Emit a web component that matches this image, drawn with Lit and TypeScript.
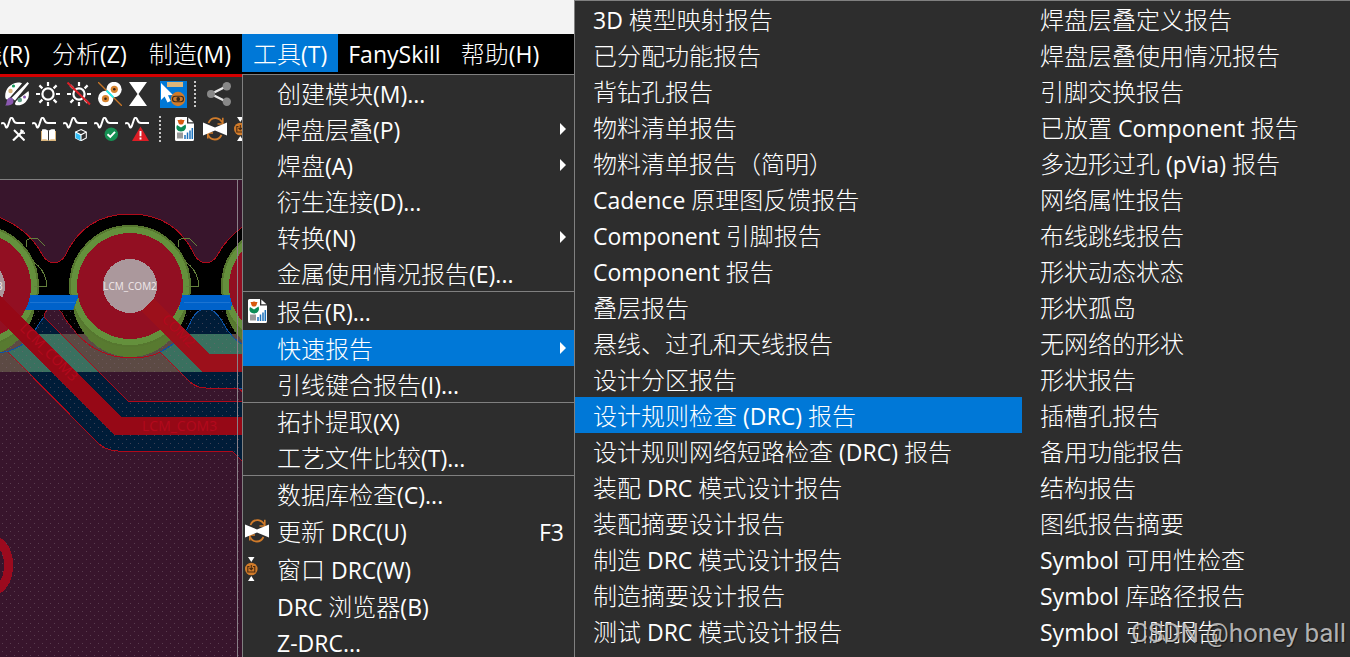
import { LitElement, html, svg, css, nothing, TemplateResult } from "lit";
import { customElement, property, state } from "lit/decorators.js";
import { classMap } from "lit/directives/class-map.js";

type IconName = "report" | "refresh" | "window";

interface MenuEntry {
  label: string;
  icon?: IconName;
  shortcut?: string;
  submenu?: boolean;
  active?: boolean;
}

const TOOLS_MENU: MenuEntry[][] = [
  [
    { label: "创建模块(M)..." },
    { label: "焊盘层叠(P)", submenu: true },
    { label: "焊盘(A)", submenu: true },
    { label: "衍生连接(D)..." },
    { label: "转换(N)", submenu: true },
    { label: "金属使用情况报告(E)..." },
  ],
  [
    { label: "报告(R)...", icon: "report" },
    { label: "快速报告", submenu: true, active: true },
    { label: "引线键合报告(I)..." },
  ],
  [{ label: "拓扑提取(X)" }, { label: "工艺文件比较(T)..." }],
  [
    { label: "数据库检查(C)..." },
    { label: "更新 DRC(U)", icon: "refresh", shortcut: "F3" },
    { label: "窗口 DRC(W)", icon: "window" },
    { label: "DRC 浏览器(B)" },
    { label: "Z-DRC..." },
  ],
];

const QUICK_REPORTS: string[][] = [
  [
    "3D 模型映射报告",
    "已分配功能报告",
    "背钻孔报告",
    "物料清单报告",
    "物料清单报告（简明）",
    "Cadence 原理图反馈报告",
    "Component 引脚报告",
    "Component 报告",
    "叠层报告",
    "悬线、过孔和天线报告",
    "设计分区报告",
    "设计规则检查 (DRC) 报告",
    "设计规则网络短路检查 (DRC) 报告",
    "装配 DRC 模式设计报告",
    "装配摘要设计报告",
    "制造 DRC 模式设计报告",
    "制造摘要设计报告",
    "测试 DRC 模式设计报告",
  ],
  [
    "焊盘层叠定义报告",
    "焊盘层叠使用情况报告",
    "引脚交换报告",
    "已放置 Component 报告",
    "多边形过孔 (pVia) 报告",
    "网络属性报告",
    "布线跳线报告",
    "形状动态状态",
    "形状孤岛",
    "无网络的形状",
    "形状报告",
    "插槽孔报告",
    "备用功能报告",
    "结构报告",
    "图纸报告摘要",
    "Symbol 可用性检查",
    "Symbol 库路径报告",
    "Symbol 引脚报告",
  ],
];

// Latin runs are set one step smaller and heavier than the Chinese characters beside them.
const label = (text: string) =>
  text
    .split(/([\x20-\x7e]+)/)
    .filter(Boolean)
    .map((run) => (/^[\x20-\x7e]/.test(run) ? html`<span class="latin">${run}</span>` : run));

const box = (content: TemplateResult, size = 24) => html`<svg
  width=${size}
  height=${size}
  viewBox="0 0 ${size} ${size}"
  aria-hidden="true"
>
  ${content}
</svg>`;

const rays = svg`<circle cx="12" cy="12" r="5.6" fill="none" stroke="#fff" stroke-width="2.2"/>
  <path d="M12 0v4M12 20v4M0 12h4M20 12h4M3.4 3.4l3 3M17.6 17.6l3 3M20.6 3.4l-3 3M6.4 17.6l-3 3" stroke="#fff" stroke-width="2.2"/>`;

const wave = svg`<path d="M0 6.500C3 5 4 7 4.500 9C5.300 12 6.700 10 7.500 7L9 2.500C9.700 .3 11.300 .3 12.200 2.500C13.200 5 13.500 6 16 6H24" fill="none" stroke="#fff" stroke-width="2"/>`;

const ICONS = {
  palette: box(svg`<path d="M13 .5C5 1.500 0 7 .2 14.500C.3 18 2.500 18.500 5 16L17 1.500C16 .5 14.500 .3 13 .5Z" fill="#fff"/>
    <path d="M11 19L23.500 9C25 14 22.500 20 17 22.500C13 24 9.500 23.500 10 21.500Z" fill="#fff"/>
    <path d="M4.500 16L18.500 .5L24 2L10 20Z" fill="#2d2d2d"/>
    <path d="M6.500 16L22.500 0L24 1.500L10 18.500Z" fill="#fff"/>
    <path d="M0 23.500C2 22.500 1 19 3 16.500C4.500 14.700 8.500 15.500 8.500 19C8.500 23 4 24 0 23.500Z" fill="#8a58b0"/>
    <circle cx="5.500" cy="9" r="2.200" fill="#dbb67c"/><circle cx="8.500" cy="4" r="1.600" fill="#159a5c"/>
    <circle cx="14.800" cy="18" r="2.300" fill="#5b9b83"/><circle cx="19.500" cy="15" r="1.500" fill="#8a58b0"/>`),
  sun: box(rays),
  sunOff: box(svg`${rays}<path d="M.5 .5L23 22.500" stroke="#dd1d25" stroke-width="2"/>`),
  pads: box(svg`<circle cx="16" cy="7.500" r="7.700" fill="#fff"/><circle cx="7.700" cy="16.500" r="7.700" fill="#fff"/>
    <circle cx="16.300" cy="7.300" r="3.600" fill="#d8842f"/><circle cx="16.300" cy="7.300" r="1.300" fill="#3a2414"/>
    <circle cx="7.500" cy="16.700" r="3.600" fill="#d8842f"/><circle cx="7.500" cy="16.700" r="1.300" fill="#3a2414"/>
    <path d="M0 0L24 24" stroke="#c87524" stroke-width="1.300"/><path d="M8.500 8.500L15.500 15.500" stroke="#23eef0" stroke-width="1.800"/>`),
  hourglass: box(svg`<path d="M0 0H18L9.500 12L18 24H0L8.500 12Z" fill="#fff"/>`),
  pick: box(
    svg`<rect width="27" height="27" fill="#0078d7"/><rect x="7" y="1" width="16" height="5" fill="#dbb67c"/>
    <path d="M1 2L1 19L4.600 15.500L7.500 21.500L10.700 20L8 14.200L13 14Z" fill="#fff"/>
    <circle cx="18" cy="18" r="7.200" fill="#d07b2a"/>
    <rect x="12.500" y="15.300" width="11" height="5.400" rx="2.700" fill="none" stroke="#38291c" stroke-width="1.100"/>
    <rect x="16.500" y="16" width="3.500" height="4" rx="1.500" fill="#38291c"/>`,
    27,
  ),
  share: box(svg`<path d="M4 12L20 4M4 12L20 20" stroke="#e8e8e8" stroke-width="2.500"/>
    <circle cx="4" cy="12" r="4" fill="#888"/><circle cx="19.800" cy="4.200" r="4.200" fill="#888"/><circle cx="19.800" cy="19.800" r="4.200" fill="#888"/>`),
  waveTools: box(svg`${wave}<path d="M13 13L23.500 23.500" stroke="#fff" stroke-width="2"/><path d="M12 23.500L22.500 13.500" stroke="#fff" stroke-width="2.200"/>
    <path d="M20 12.500L20.500 15.800L24 16.200" fill="none" stroke="#fff" stroke-width="1.800"/>`),
  waveBook: box(svg`${wave}<path d="M9 14H24V24H9Z" fill="#dbb67c"/><path d="M10 12.500C13 12 15 12.500 16.500 14C18 12.500 20 12 23 12.500V22.500C20 22 18 22.500 16.500 23.500C15 22.500 13 22 10 22.500Z" fill="#fff"/><path d="M16.500 14V23.500" stroke="#333" stroke-width="1"/>`),
  waveCube: box(svg`${wave}<path d="M18 12.500L23.300 15V21L18 23.800L12.500 21V15Z" fill="#2d2d2d" stroke="#fff" stroke-width="1.100"/>
    <path d="M12.500 15L18 17.800V23.800L12.500 21Z" fill="#35bdf4"/><path d="M12.500 15L18 17.800L23.300 15M18 17.800V23.800" fill="none" stroke="#fff" stroke-width="1.100"/>`),
  waveCheck: box(svg`${wave}<circle cx="17.300" cy="17.300" r="6.700" fill="#159053"/><path d="M13.500 17.300L16.300 20L21 14.800" fill="none" stroke="#fff" stroke-width="1.900"/>`),
  waveAlert: box(svg`${wave}<path d="M15.500 9.500L24 24H7Z" fill="#dd1d25"/><path d="M15.500 14V19.300M15.500 20.500V22.500" stroke="#fff" stroke-width="1.900"/>`),
  report: box(svg`<path d="M4.500 0H15V6.500H22V22.500Q22 24 20.500 24H4.500Q3 24 3 22.500V1.500Q3 0 4.500 0Z" fill="#fff"/>
    <path d="M16.300 .5V5.200H21.500Z" fill="#fff"/>
    <path d="M5.500 3H12.500L11.500 5.500H6.500Z" fill="#d8590f"/><circle cx="9" cy="5" r="2.600" fill="#d8590f"/>
    <path d="M5 8L9 10.500L13.500 7.500C15 11 13 14.500 9 14.500C5 14.500 3.500 11 5 8Z" fill="#0b8c56"/>
    <rect x="5" y="15.500" width="6" height="6" fill="#999"/>
    <path d="M13 22V18M15.500 22V15.500M18 22V13.500M20.300 22V11" stroke="#1c72bc" stroke-width="1.500"/>`),
  refresh: box(svg`<path d="M5.500 6C7 2.500 10 1 13 1.200C16 1.500 18 3 19 5.500M18.500 18C17 21 14.500 22.500 12 22.500C8.500 22.500 6 20.500 5 17.500" fill="none" stroke="#d07b2a" stroke-width="1.800"/>
    <path d="M19.800 .8V7H14.500M4.800 21.500V16H10" fill="none" stroke="#d07b2a" stroke-width="1.600"/>
    <path d="M0 5.500L12 10.500L24 5.500V18.500L12 13.500L0 18.500Z" fill="#fff"/>`),
  window: box(svg`<path d="M3 0H9.500L6.300 5ZM3 24H9.500L6.300 19Z" fill="#fff"/><circle cx="6.300" cy="12" r="6.300" fill="#d07b2a"/>
    <path d="M4.500 9.500H2.800V15H9.800V9.500H8M6.300 8V12.500M4.500 11L6.300 12.700L8 11" fill="none" stroke="#4a2b10" stroke-width="1.100"/>`),
};

@customElement("board-canvas")
class BoardCanvas extends LitElement {
  static styles = css`
    :host {
      display: block;
      overflow: hidden;
      background: #38152c;
      border-top: 1px solid #808080;
    }
    svg {
      display: block;
      width: 100%;
      height: 100%;
      font-family: "Open Sans", "Noto Sans", sans-serif;
      font-weight: 400;
      shape-rendering: crispEdges;
    }
  `;

  private readonly padCentres = [-22, 130, 282];

  private ring(x: number) {
    return svg`<g>
      <ellipse cx=${x} cy="296" rx="58" ry="61" fill="#587a30"/>
      <circle cx=${x} cy="286" r="60" fill="#64903c" stroke="#56772f" stroke-width="2"/>
      <path d="M${x + 48} 247V241C${x + 50} 238 ${x + 56} 238 ${x + 60} 239L${x + 67} 246M${x + 56} 262Q${x + 66} 270 ${x + 68} 280V286H${x + 56}" fill="none" stroke="#64803c"/>
    </g>`;
  }

  private hole(x: number) {
    return svg`<g>
      <circle cx=${x} cy="286" r="53" fill="#920f22"/>
      <circle cx=${x} cy="286" r="27" fill="#ab989c"/>
    </g>`;
  }

  render() {
    const com3 =
      "M-20 352H8L97 442Q104 450 118 451H232L244 463V401H128L44 317Q38 324 32 336Q20 350 0 353Z";
    const com2 =
      "M160 352L190 382Q197 388 206 388H244V345Q232 340 222 321Q215 309 206 309Q197 309 192 319Q184 340 160 352Z";
    return html`<svg role="img" aria-label="PCB">
      <defs>
        <pattern id="dots" width="8" height="8" patternUnits="userSpaceOnUse">
          <path d="M2 3h1v1h-1zM6 7h1v1h-1z" fill="#7a6470" fill-opacity="0.5" />
        </pattern>
        <clipPath id="nets"><path d=${com3} /><path d=${com2} /></clipPath>
      </defs>
      <g transform="translate(0 -180)">
        <path
          d="M-10 214Q28 226 43 256Q48 263 54 263Q60 263 65 256Q84 214 130 214Q176 214 195 256Q200 263 206 263Q212 263 217 256Q226 238 244 226V334H-10Z"
          fill="#000"
          stroke="#b00a1a"
        />
        <path d="M44 334V316Q46 308 53 308Q61 308 65 319L77 334Z" fill="#38152c" stroke="#a00b1c" />
        <path d=${com3} fill="#001c38" />
        <path d=${com2} fill="#001c38" stroke="#0a52a8" />
        <rect y="334" width="244" height="38" fill="#5c4a44" />
        <rect y="334" width="244" height="38" fill="#3a705f" clip-path="url(#nets)" />
        <path d="M44 317Q38 324 32 336Q20 350 0 353M160 352Q184 340 192 319Q197 309 206 309Q215 309 222 321Q232 340 244 345" fill="none" stroke="#0a52a8" />
        <rect y="310" width="2000" height="1400" fill="url(#dots)" />
        <path d="M8 352L97 442Q104 450 118 451H232L244 463M44 317L128 401H244M160 352L190 382Q197 388 206 388H238L244 393" fill="none" stroke="#b00a1a" />
        ${this.padCentres.map((x) => this.ring(x))}
        <path d="M27 295H79L73 310H25ZM181 295H233L231 310H179Z" fill="#0062ca" />
        <path d="M30 302.500H75M184 302.500H230" stroke="#1c74d2" />
        ${this.padCentres.map((x) => this.hole(x))}
        <path d="M77 334Q98 357 130 358Q150 358 160 352" fill="none" stroke="#b00a1a" />
        <path d="M-12 296L118 426H244" fill="none" stroke="#960816" stroke-width="18" />
        <path d="M148 305L206 363H244" fill="none" stroke="#9c101b" stroke-width="18" />
        <g fill="#b3081d" font-size="14">
          <text x="142" y="431">LCM_COM3</text>
          <text transform="translate(19 329) rotate(45)">LCM_COM3</text>
          <text transform="translate(161 320) rotate(45)">COM2</text>
        </g>
        <g fill="#f0e8ea" font-size="10" text-anchor="middle">
          <text x="130" y="290">LCM_COM2</text>
          <text x="-24" y="290">LCM_COM3</text>
        </g>
        <path d="M-3 541Q8.500 548 8.500 565Q8.500 583 -3 590" fill="none" stroke="#9b0a1e" stroke-width="9" />
        <path d="M237.500 180V1400" stroke="#8a8088" />
      </g>
    </svg>`;
  }
}

@customElement("menu-row")
class MenuRow extends LitElement {
  static styles = css`
    :host {
      display: block;
    }
    button {
      display: grid;
      grid-template-columns: 24px 1fr auto;
      column-gap: 8px;
      align-items: center;
      box-sizing: border-box;
      width: 100%;
      height: 36px;
      margin: 0;
      padding: 0 8px 0 2px;
      border: 0;
      background: none;
      color: #fff;
      font: inherit;
      line-height: 34px;
      text-align: left;
      white-space: nowrap;
    }
    button.tall {
      height: 38px;
    }
    button.plain {
      display: block;
      padding: 2px 18px 0;
    }
    button.active {
      background: #0078d7;
    }
    .latin {
      font-size: 23px;
      font-weight: 400;
    }
    .icon {
      display: flex;
    }
    .text,
    .shortcut {
      padding-top: 2px;
    }
    .arrow {
      width: 6px;
      height: 12px;
      background: #fff;
      clip-path: polygon(0 0, 100% 50%, 0 100%);
    }
    .shortcut {
      padding-right: 2px;
      font-size: 23px;
      font-weight: 400;
    }
  `;

  @property({ attribute: false }) entry!: MenuEntry;
  @property({ type: Boolean }) plain = false;

  render() {
    const { entry, plain } = this;
    const classes = classMap({ plain, active: !!entry.active, tall: !!entry.icon });
    if (plain) {
      return html`<button class=${classes} role="menuitem">${label(entry.label)}</button>`;
    }
    return html`<button class=${classes} role="menuitem" aria-haspopup=${entry.submenu ? "menu" : nothing}>
      <span class="icon">${entry.icon ? ICONS[entry.icon] : nothing}</span>
      <span class="text">${label(entry.label)}</span>
      ${entry.submenu ? html`<span class="arrow"></span>` : nothing}
      ${entry.shortcut ? html`<span class="shortcut">${entry.shortcut}</span>` : nothing}
    </button>`;
  }
}

@customElement("app-root")
class AppRoot extends LitElement {
  static styles = css`
    :host {
      position: relative;
      display: flex;
      flex-direction: column;
      height: 100vh;
      overflow: hidden;
      background: #2d2d2d;
      color: #fff;
      font: 300 24px/36px "Open Sans", "Noto Sans CJK SC", sans-serif;
    }
    .titlebar {
      height: 34px;
      background: #f3f3f3;
    }
    .menubar {
      display: flex;
      height: 40px;
      background: #000;
    }
    .leading {
      display: flex;
      justify-content: flex-end;
      width: 242px;
      overflow: hidden;
    }
    .menubar .menu {
      flex: none;
      height: 38px;
      padding: 2px 10px 0;
      border: 0;
      background: none;
      color: #fff;
      font: inherit;
      white-space: nowrap;
    }
    .leading .menu,
    .menubar .open {
      padding: 2px 11px 0;
    }
    .menubar .open {
      background: #0078d7;
    }
    .latin {
      font-size: 23px;
      font-weight: 400;
    }
    .anchor {
      position: relative;
    }
    .dropdown {
      position: absolute;
      z-index: 1;
      top: 40px;
      left: 0;
      width: 331px;
      border: 1px solid #808080;
      background: #2d2d2d;
    }
    .group + .group {
      border-top: 1px solid #808080;
    }
    .toolbars {
      display: flex;
      flex-direction: column;
      gap: 8px;
      padding: 4px 0 36px;
      border-top: 3px solid #d40000;
    }
    .toolbar {
      display: flex;
      align-items: center;
      gap: 7px;
      height: 26px;
      padding-left: 5px;
    }
    .toolbar.second {
      height: 28px;
      padding-left: 1px;
    }
    .toolbar button {
      display: flex;
      padding: 0;
      border: 0;
      background: none;
    }
    .divider {
      width: 4px;
      height: 26px;
      border-left: 2px dotted #c8c8c8;
    }
    .second .divider {
      margin-left: 3px;
    }
    board-canvas {
      flex: 1;
      min-height: 0;
    }
    .flyout {
      position: absolute;
      z-index: 2;
      inset: 0 0 0 574px;
      display: grid;
      grid-template-columns: 447px 1fr;
      align-content: start;
      border: 1px solid #808080;
      border-width: 1px 0 0 1px;
      background: #2d2d2d;
    }
    .watermark {
      position: absolute;
      z-index: 3;
      right: 4px;
      bottom: 6px;
      color: rgba(205, 205, 205, 0.85);
      font: 400 26px/36px Roboto, "Liberation Sans", sans-serif;
      text-shadow: 1px 1px 1px rgba(0, 0, 0, 0.5);
    }
  `;

  @state() private selected = "设计规则检查 (DRC) 报告";

  private tools(names: (keyof typeof ICONS)[]) {
    return names.map((name) => html`<button aria-label=${name}>${ICONS[name]}</button>`);
  }

  private menu(text: string) {
    return html`<button class="menu" role="menuitem">${label(text)}</button>`;
  }

  render() {
    return html`
      <div class="titlebar"></div>
      <nav class="menubar" role="menubar">
        <div class="leading">${["布线(R)", "分析(Z)", "制造(M)"].map((t) => this.menu(t))}</div>
        <div class="anchor">
          <button class="menu open" role="menuitem" aria-expanded="true">${label("工具(T)")}</button>
          <div class="dropdown" role="menu">
            ${TOOLS_MENU.map(
              (group) => html`<div class="group" role="group">
                ${group.map((entry) => html`<menu-row .entry=${entry}></menu-row>`)}
              </div>`,
            )}
          </div>
        </div>
        ${["FanySkill", "帮助(H)"].map((t) => this.menu(t))}
      </nav>
      <div class="toolbars">
        <div class="toolbar" role="toolbar">
          ${this.tools(["palette", "sun", "sunOff", "pads", "hourglass", "pick"])}
          <span class="divider"></span>
          ${this.tools(["share"])}
        </div>
        <div class="toolbar second" role="toolbar">
          ${this.tools(["waveTools", "waveBook", "waveCube", "waveCheck", "waveAlert"])}
          <span class="divider"></span>
          ${this.tools(["report", "refresh", "window"])}
        </div>
      </div>
      <board-canvas></board-canvas>
      <div class="flyout" role="menu">
        ${QUICK_REPORTS.map(
          (column) => html`<div>
            ${column.map(
              (name) => html`<menu-row
                plain
                .entry=${{ label: name, active: name === this.selected }}
                @click=${() => (this.selected = name)}
              ></menu-row>`,
            )}
          </div>`,
        )}
      </div>
      <div class="watermark">CSDN @honey ball</div>
    `;
  }
}
